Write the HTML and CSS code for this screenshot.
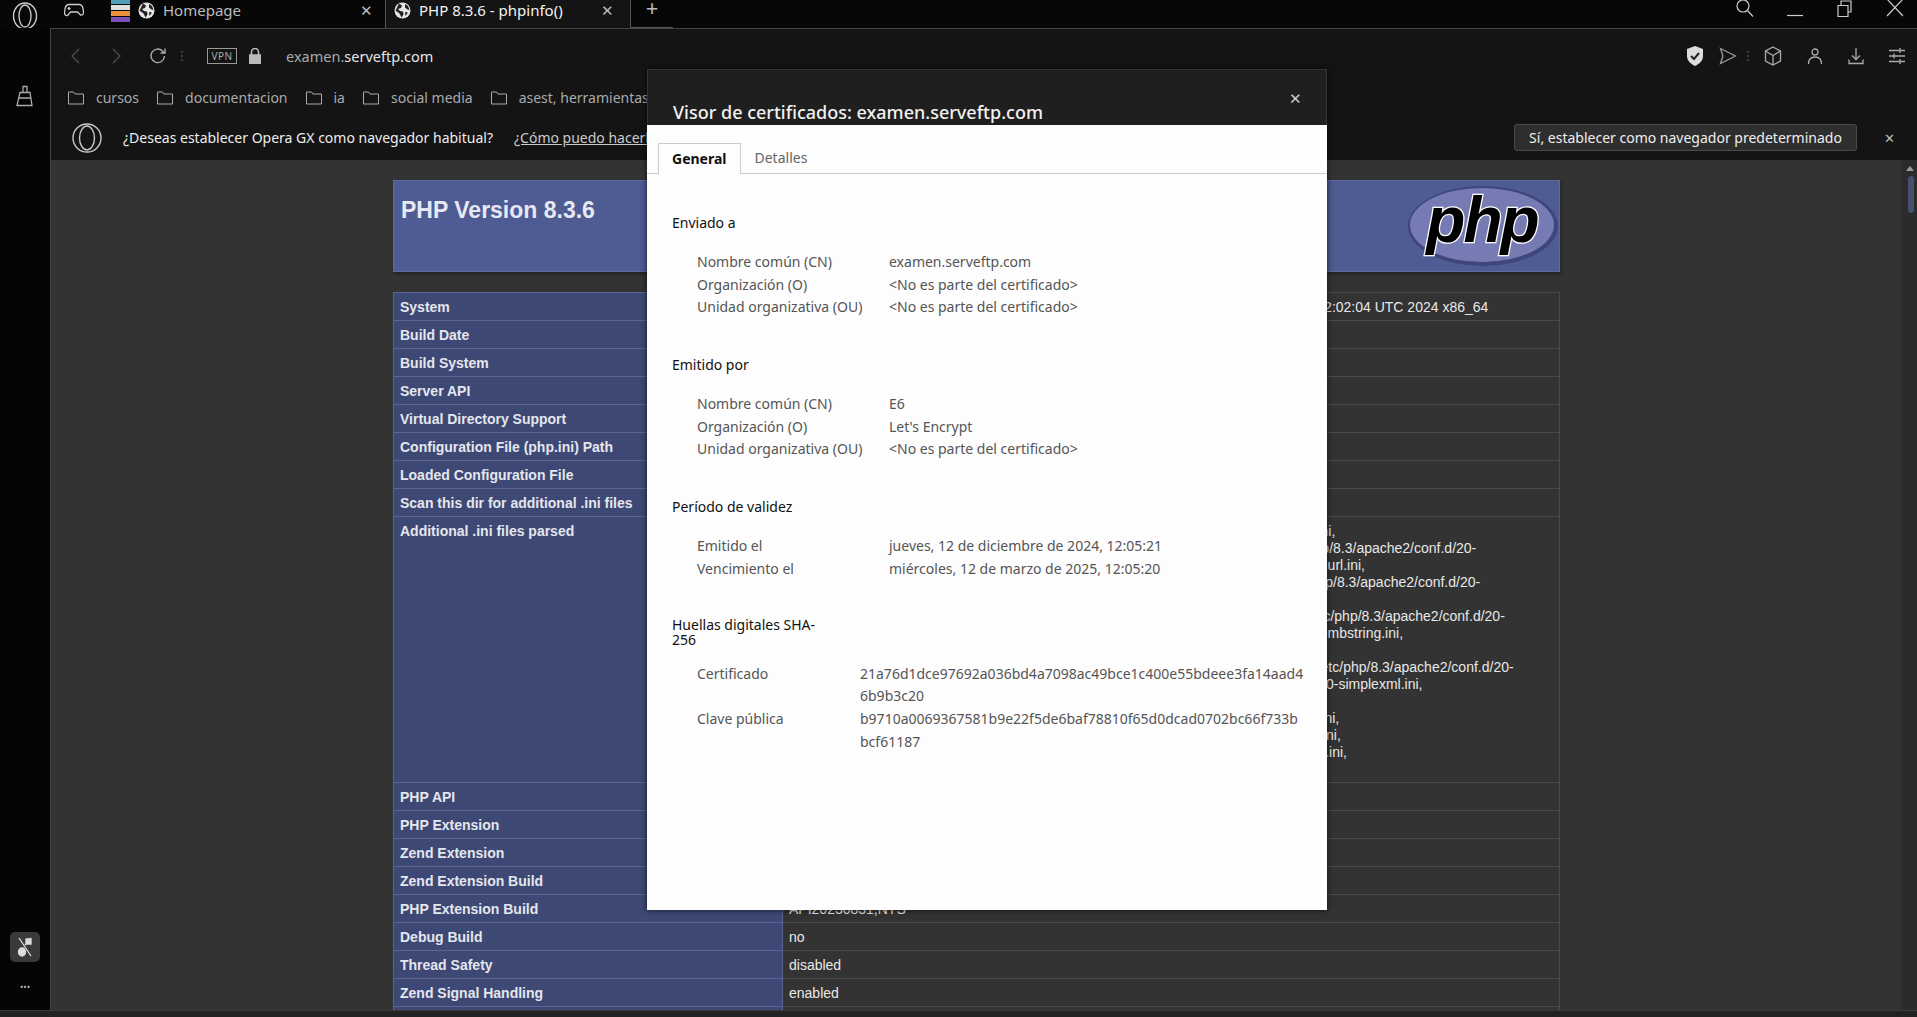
FILE: index.html
```html
<!DOCTYPE html>
<html lang="es">
<head>
<meta charset="utf-8">
<title>PHP 8.3.6 - phpinfo()</title>
<link rel="stylesheet" href="styles.css">
</head>
<body>
<!-- barra de pestañas -->
<div class="tabstrip">
	<svg class="opera-logo" width="26" height="28" viewBox="0 0 26 28"><ellipse cx="13" cy="14" rx="11.5" ry="13" /><ellipse cx="13" cy="14" rx="6" ry="11" /></svg>
	<svg class="ico-game" width="20" height="14" viewBox="0 0 20 14"><path d="M5 1.5h10c2 0 3.500 1.500 4 4l.5 4c.2 2-2 3.500-3.500 2l-2.500-2.500h-7L4 12c-1.500 1.500-3.700 0-3.500-2l.5-4c.5-3 2-4.500 4-4.500z" /><path d="M5 4v3M3.500 5.500h3M13.500 5.500h.1M15.500 5.500h.1" /></svg>
	<div class="ico-books"><i class="bk1"></i><i class="bk2"></i><i class="bk3"></i><i class="bk4"></i></div>
	<div class="tab">
		<svg class="globe" width="17" height="17" viewBox="0 0 17 17"><circle cx="8.500" cy="8.500" r="8" /><path d="M5 1.500l3 2-1 2.500-3 1 2 2 3 .5.500 3-2 3-2-4-4-3zM11 2l3 2 1.500 4-2-.5-2.500-2zM11 10l3 .5-2.500 3.500z" /></svg>
		<span class="tab-title">Homepage</span>
		<span class="tab-x">✕</span>
	</div>
	<div class="tab tab-on">
		<svg class="globe" width="17" height="17" viewBox="0 0 17 17"><circle cx="8.500" cy="8.500" r="8" /><path d="M5 1.500l3 2-1 2.500-3 1 2 2 3 .5.500 3-2 3-2-4-4-3zM11 2l3 2 1.500 4-2-.5-2.500-2zM11 10l3 .5-2.500 3.500z" /></svg>
		<span class="tab-title">PHP 8.3.6 - phpinfo()</span>
		<span class="tab-x">✕</span>
	</div>
	<div class="tab-plus">+</div>
	<div class="win-btns">
		<svg width="20" height="20" viewBox="0 0 20 20"><circle cx="8" cy="7" r="6" /><path d="M12.500 11.500l5.500 6" /></svg>
		<svg width="20" height="20" viewBox="0 0 20 20"><path d="M2 16.500h16" /></svg>
		<svg width="20" height="20" viewBox="0 0 20 20"><path d="M3 6.500h10v11H3zM6 6V2h10v11h-3" /></svg>
		<svg width="20" height="20" viewBox="0 0 20 20"><path d="M2 0l16 17M18 0L2 17" /></svg>
	</div>
</div>

<div class="main">
	<!-- barra lateral -->
	<div class="sidebar">
		<svg class="ico-bag" width="20" height="22" viewBox="0 0 20 22"><path d="M8 1.500h4v6H8zM5 7.500h10l2 13H2zM3.500 13h13" /></svg>
		<div class="side-btn">
			<svg width="16" height="20" viewBox="0 0 16 20"><path class="cut" d="M2 1l12 18M14 1L8 8" /><ellipse cx="5" cy="15" rx="3.500" ry="4" /><path d="M9 2h5v5H9z" /></svg>
		</div>
		<div class="side-dots">•••</div>
	</div>

	<div class="browser">
		<!-- barra de direcciones -->
		<div class="toolbar">
			<svg class="ico-nav dim" width="14" height="18" viewBox="0 0 14 18"><path d="M10 2L3 9l7 7" /></svg>
			<svg class="ico-nav dim fwd" width="14" height="18" viewBox="0 0 14 18"><path d="M4 2l7 7-7 7" /></svg>
			<svg class="ico-nav reload" width="18" height="18" viewBox="0 0 18 18"><path d="M15.500 9a6.800 6.800 0 1 1-2-5l2 2M16 1.500V6h-4.500" /></svg>
			<div class="tool-dots"><i></i><i></i><i></i></div>
			<span class="vpn">VPN</span>
			<svg class="ico-lock" width="12" height="16" viewBox="0 0 12 16"><path class="lock-body" d="M0 7h12v9H0z" /><path d="M2.500 7V4a3.500 3.500 0 0 1 7 0v3" /></svg>
			<div class="url"><span class="url-sub">examen.</span>serveftp.com</div>
			<div class="tool-right">
				<svg width="18" height="20" viewBox="0 0 18 20"><path class="shield" d="M9 0l8 3v7c0 5-4 8-8 10-4-2-8-5-8-10V3z" /><path class="tick" d="M5 10l3 3 5-6" /></svg>
				<svg class="send" width="18" height="18" viewBox="0 0 18 18"><path d="M1.500 1.500L16.500 9l-15 7.500L4 9z" /></svg>
				<div class="tool-dots"><i></i><i></i><i></i></div>
				<svg class="cube" width="18" height="20" viewBox="0 0 18 20"><path d="M9 1l7.500 4v10L9 19l-7.500-4V5zM1.500 5L9 9.500 16.500 5M9 9.500V19" /></svg>
				<svg class="person" width="16" height="18" viewBox="0 0 16 18"><circle cx="8" cy="5" r="3" /><path d="M1.500 17c0-5 2.500-7 6.500-7s6.500 2 6.500 7" /></svg>
				<svg class="down" width="18" height="18" viewBox="0 0 18 18"><path d="M9 1v11M5 8.500l4 4 4-4M2 12.500v4h14v-4" /></svg>
				<svg class="sliders" width="18" height="18" viewBox="0 0 18 18"><path d="M1 3.500h16M1 9h16M1 14.500h16M12 1v5M6 6.500v5M12 12v5" /></svg>
			</div>
		</div>

		<!-- marcadores -->
		<div class="bookmarks">
			<div class="bm"><svg width="16" height="14" viewBox="0 0 16 14"><path d="M.5 1h5l1.500 2h8.500v10H.5z" /></svg><span>cursos</span></div>
			<div class="bm"><svg width="16" height="14" viewBox="0 0 16 14"><path d="M.5 1h5l1.500 2h8.500v10H.5z" /></svg><span>documentacion</span></div>
			<div class="bm"><svg width="16" height="14" viewBox="0 0 16 14"><path d="M.5 1h5l1.500 2h8.500v10H.5z" /></svg><span>ia</span></div>
			<div class="bm"><svg width="16" height="14" viewBox="0 0 16 14"><path d="M.5 1h5l1.500 2h8.500v10H.5z" /></svg><span>social media</span></div>
			<div class="bm"><svg width="16" height="14" viewBox="0 0 16 14"><path d="M.5 1h5l1.500 2h8.500v10H.5z" /></svg><span>asest, herramientas, etc</span></div>
		</div>

		<!-- aviso navegador predeterminado -->
		<div class="infobar">
			<svg class="opera-logo" width="30" height="30" viewBox="0 0 30 30"><ellipse cx="15" cy="15" rx="14" ry="14" /><ellipse cx="15" cy="15" rx="7.500" ry="12" /></svg>
			<span class="info-text">¿Deseas establecer Opera GX como navegador habitual?</span>
			<a class="info-link" href="#">¿Cómo puedo hacerlo?</a>
			<button class="info-btn">Sí, establecer como navegador predeterminado</button>
			<span class="info-x">✕</span>
		</div>

		<div class="page-wrap">
			<div class="page">
				<div class="php-head">
					<h1>PHP Version 8.3.6</h1>
					<svg class="php-logo" width="150" height="80" viewBox="0 0 150 80">
						<ellipse class="logo-edge" cx="75" cy="40" rx="75" ry="40" />
						<ellipse class="logo-fill" cx="74" cy="39" rx="72" ry="37" />
						<text class="logo-text" x="74" y="56" text-anchor="middle">php</text>
					</svg>
				</div>
				<table class="info">
					<tr><th>System</th><td>Linux vps-1234 6.8.0-45-generic #45-Ubuntu SMP PREEMPT_DYNAMIC Fri Aug 30 12:02:04 UTC 2024 x86_64</td></tr>
					<tr><th>Build Date</th><td>Apr 11 2024 20:23:38</td></tr>
					<tr><th>Build System</th><td>Linux</td></tr>
					<tr><th>Server API</th><td>Apache 2.0 Handler</td></tr>
					<tr><th>Virtual Directory Support</th><td>disabled</td></tr>
					<tr><th>Configuration File (php.ini) Path</th><td>/etc/php/8.3/apache2</td></tr>
					<tr><th>Loaded Configuration File</th><td>/etc/php/8.3/apache2/php.ini</td></tr>
					<tr><th>Scan this dir for additional .ini files</th><td>/etc/php/8.3/apache2/conf.d</td></tr>
					<tr class="row-tall"><th>Additional .ini files parsed</th><td>/etc/php/8.3/apache2/conf.d/10-mysqlnd.ini, /etc/php/8.3/apache2/conf.d/10-opcache.ini,<br>
						/etc/php/8.3/apache2/conf.d/10-pdo.ini, /etc/php/8.3/apache2/conf.d/15-xml.ini, /etc/php/8.3/apache2/conf.d/20-<br>
						calendar.ini, /etc/php/8.3/apache2/conf.d/20-ctype.ini, /etc/php/8.3/apache2/conf.d/20-curl.ini,<br>
						/etc/php/8.3/apache2/conf.d/20-dom.ini, /etc/php/8.3/apache2/conf.d/20-exif.ini, /etc/php/8.3/apache2/conf.d/20-<br>
						ffi.ini, /etc/php/8.3/apache2/conf.d/20-fileinfo.ini, /etc/php/8.3/apache2/conf.d/20-ftp.ini,<br>
						/etc/php/8.3/apache2/conf.d/20-gettext.ini, /etc/php/8.3/apache2/conf.d/20-iconv.ini, /etc/php/8.3/apache2/conf.d/20-<br>
						mbstring.ini, /etc/php/8.3/apache2/conf.d/20-mysqli.ini, /etc/php/8.3/apache2/conf.d/20-mbstring.ini,<br>
						/etc/php/8.3/apache2/conf.d/20-pdo_mysql.ini, /etc/php/8.3/apache2/conf.d/20-phar.ini,<br>
						/etc/php/8.3/apache2/conf.d/20-posix.ini, /etc/php/8.3/apache2/conf.d/20-readline.ini, /etc/php/8.3/apache2/conf.d/20-<br>
						shmop.ini, /etc/php/8.3/apache2/conf.d/20-simplexml.ini, /etc/php/8.3/apache2/conf.d/20-simplexml.ini,<br>
						/etc/php/8.3/apache2/conf.d/20-sockets.ini,<br>
						/etc/php/8.3/apache2/conf.d/20-sysvmsg.ini, /etc/php/8.3/apache2/conf.d/20-sysvsem.ini,<br>
						/etc/php/8.3/apache2/conf.d/20-sysvshm.ini, /etc/php/8.3/apache2/conf.d/20-tokenizer.ini,<br>
						/etc/php/8.3/apache2/conf.d/20-xmlreader.ini, /etc/php/8.3/apache2/conf.d/20-xmlwriter.ini,</td></tr>
					<tr><th>PHP API</th><td>20230831</td></tr>
					<tr><th>PHP Extension</th><td>20230831</td></tr>
					<tr><th>Zend Extension</th><td>420230831</td></tr>
					<tr><th>Zend Extension Build</th><td>API420230831,NTS</td></tr>
					<tr><th>PHP Extension Build</th><td>API20230831,NTS</td></tr>
					<tr><th>Debug Build</th><td>no</td></tr>
					<tr><th>Thread Safety</th><td>disabled</td></tr>
					<tr><th>Zend Signal Handling</th><td>enabled</td></tr>
					<tr><th>Zend Memory Manager</th><td>enabled</td></tr>
				</table>
			</div>
			<div class="scroll">
				<span class="scroll-up"></span>
				<span class="scroll-thumb"></span>
			</div>
		</div>
	</div>
</div>
<div class="statusline"></div>

<!-- visor de certificados -->
<div class="modal">
	<div class="modal-head">
		<span class="modal-title">Visor de certificados: examen.serveftp.com</span>
		<span class="modal-x">✕</span>
	</div>
	<div class="modal-tabs">
		<span class="mtab mtab-on">General</span>
		<span class="mtab">Detalles</span>
	</div>
	<div class="modal-body">
		<h3>Enviado a</h3>
		<dl class="fields">
			<dt>Nombre común (CN)</dt><dd>examen.serveftp.com</dd>
			<dt>Organización (O)</dt><dd>&lt;No es parte del certificado&gt;</dd>
			<dt>Unidad organizativa (OU)</dt><dd>&lt;No es parte del certificado&gt;</dd>
		</dl>
		<h3>Emitido por</h3>
		<dl class="fields">
			<dt>Nombre común (CN)</dt><dd>E6</dd>
			<dt>Organización (O)</dt><dd>Let's Encrypt</dd>
			<dt>Unidad organizativa (OU)</dt><dd>&lt;No es parte del certificado&gt;</dd>
		</dl>
		<h3>Período de validez</h3>
		<dl class="fields">
			<dt>Emitido el</dt><dd>jueves, 12 de diciembre de 2024, 12:05:21</dd>
			<dt>Vencimiento el</dt><dd>miércoles, 12 de marzo de 2025, 12:05:20</dd>
		</dl>
		<h3 class="h-narrow">Huellas digitales SHA-256</h3>
		<dl class="fields fields-hash">
			<dt>Certificado</dt><dd>21a76d1dce97692a036bd4a7098ac49bce1c400e55bdeee3fa14aad46b9b3c20</dd>
			<dt>Clave pública</dt><dd>b9710a0069367581b9e22f5de6baf78810f65d0dcad0702bc66f733bbcf61187</dd>
		</dl>
	</div>
</div>
</body>
</html>
```

FILE: styles.css
```css
* {
	margin: 0;
	padding: 0;
	box-sizing: border-box;
}
html, body {
	width: 1917px;
	height: 1017px;
	overflow: hidden;
}
body {
	background-color: #050505;
	font-family: "Noto Sans", "Liberation Sans", sans-serif;
	font-size: 14px;
	color: #ddd;
	position: relative;
}
svg {
	fill: none;
	stroke: #bbb;
	stroke-width: 1.3;
	flex: none;
}

/* pestañas */
.tabstrip {
	height: 28px;
	display: flex;
	align-items: flex-start;
	background-color: #070707;
	overflow: hidden;
}
.tabstrip .opera-logo {
	margin: 2px 0 0 12px;
}
.opera-logo {
	stroke: #c8c8c8;
	stroke-width: 1.4;
}
.ico-game {
	margin: 3px 0 0 26px;
	stroke: #ccc;
}
.ico-books {
	width: 19px;
	margin: -1px 0 0 27px;
	display: flex;
	flex-direction: column;
	gap: 1px;
}
.ico-books i {
	height: 5px;
	display: block;
}
.bk1 { background-color: #4f9fb8; }
.bk2 { background-color: #e0e0e0; }
.bk3 { background-color: #e8913a; }
.bk4 { background-color: #7a52b8; }
.tab {
	width: 240px;
	height: 28px;
	margin-left: 0;
	display: flex;
	align-items: flex-start;
	padding: 1px 12px 0 0;
	color: #bbb;
}
.tab:nth-of-type(2) {
	margin-left: 8px;
	width: 247px;
}
.globe {
	stroke: none;
	fill: #e6e6e6;
	margin: 1px 8px 0 0;
}
.globe path {
	fill: #222;
}
.tab-title {
	flex: 1;
	font-size: 15px;
	line-height: 18px;
}
.tab-x {
	font-size: 15px;
	line-height: 18px;
	color: #bbb;
}
.tab-on {
	width: 246px;
	padding: 1px 16px 0 8px;
	color: #f2f2f2;
	background-color: #141414;
	border-left: 1px solid #555;
	border-right: 1px solid #555;
}
.tab-plus {
	width: 42px;
	height: 28px;
	text-align: center;
	font-size: 22px;
	line-height: 14px;
	color: #bbb;
	border-bottom: 1px solid #555;
	border-right: 0;
}
.win-btns {
	margin-left: auto;
	padding-right: 12px;
	display: flex;
	gap: 30px;
	margin-top: -1px;
}
.win-btns svg {
	stroke: #ccc;
	stroke-width: 1.2;
}

.main {
	height: 982px;
	display: flex;
}

/* barra lateral */
.sidebar {
	width: 50px;
	flex: none;
	display: flex;
	flex-direction: column;
	align-items: center;
}
.ico-bag {
	margin-top: 57px;
	stroke: #aaa;
}
.side-btn {
	width: 30px;
	height: 30px;
	margin-top: auto;
	background-color: #3a3a3a;
	border-radius: 5px;
	display: flex;
	align-items: center;
	justify-content: center;
}
.side-btn svg {
	stroke: #ddd;
	fill: #ddd;
}
.side-dots {
	font-size: 9px;
	letter-spacing: 0;
	color: #bbb;
	margin: 19px 0 17px;
	line-height: 12px;
}

.browser {
	flex: 1;
	min-width: 0;
	display: flex;
	flex-direction: column;
	background-color: #141414;
	border-left: 1px solid #444;
	border-top: 1px solid #444;
}

/* direcciones */
.toolbar {
	height: 51px;
	display: flex;
	align-items: center;
	padding-top: 2px;
}
.ico-nav {
	stroke-width: 1.4;
}
.dim {
	stroke: #4d4d4d;
	margin-left: 18px;
}
.fwd {
	margin-left: 26px;
}
.reload {
	margin-left: 26px;
	stroke: #aaa;
}
.tool-dots {
	display: flex;
	flex-direction: column;
	gap: 2px;
	margin-left: 14px;
}
.tool-dots i {
	width: 2px;
	height: 2px;
	display: block;
	background-color: #3c3c3c;
}
.vpn {
	width: 30px;
	height: 16px;
	margin-left: 24px;
	border: 1px solid #999;
	font-size: 10px;
	line-height: 14px;
	text-align: center;
	color: #aaa;
	letter-spacing: .5px;
}
.ico-lock {
	margin-left: 12px;
	stroke: #bbb;
	stroke-width: 1.6;
}
.lock-body {
	fill: #bbb;
}
.url {
	margin-left: 25px;
	font-size: 14.5px;
	color: #e6e6e6;
}
.url-sub {
	color: #aaa;
}
.tool-right {
	margin-left: auto;
	padding-right: 11px;
	display: flex;
	align-items: center;
}
.shield {
	fill: #ddd;
	stroke: none;
}
.tick {
	stroke: #222;
	stroke-width: 2;
}
.send {
	margin-left: 15px;
	stroke: #999;
}
.tool-right .tool-dots {
	margin-left: 10px;
}
.cube {
	margin-left: 15px;
	stroke: #aaa;
}
.person {
	margin-left: 25px;
	stroke: #aaa;
}
.down {
	margin-left: 24px;
	stroke: #aaa;
}
.sliders {
	margin-left: 23px;
	stroke: #aaa;
}

/* marcadores */
.bookmarks {
	height: 35px;
	display: flex;
	align-items: center;
	padding-left: 17px;
	gap: 18px;
	color: #aaa;
	white-space: nowrap;
	overflow: hidden;
}
.bm {
	display: flex;
	align-items: center;
	gap: 12px;
}
.bm svg {
	stroke: #aaa;
	stroke-width: 1;
}

/* aviso */
.infobar {
	height: 45px;
	display: flex;
	align-items: center;
	padding-left: 21px;
	color: #eee;
	white-space: nowrap;
}
.info-text {
	margin-left: 21px;
}
.info-link {
	margin-left: 21px;
	color: #ccc;
}
.info-btn {
	margin-left: auto;
	width: 343px;
	height: 27px;
	background-color: #2e2e2e;
	border: 1px solid #4a4a4a;
	border-radius: 3px;
	color: #eee;
	font-family: inherit;
	font-size: 14px;
}
.info-x {
	margin: 0 22px 0 27px;
	font-size: 13px;
	color: #bbb;
}

/* contenido */
.page-wrap {
	flex: 1;
	min-height: 0;
	display: flex;
	background-color: #333;
	overflow: hidden;
}
.page {
	flex: 1;
	padding-top: 20px;
	font-family: "Liberation Sans", Arial, sans-serif;
	color: #e8e8e8;
	display: flex;
	flex-direction: column;
	align-items: center;
}
.php-head {
	width: 1167px;
	height: 92px;
	flex: none;
	padding: 4px 7px;
	background-color: #4f5b93;
	border: 1px solid #5f6a9c;
	box-shadow: 1px 2px 3px #222;
	display: flex;
	justify-content: space-between;
	align-items: flex-start;
}
.php-head h1 {
	font-size: 23px;
	line-height: 50px;
	color: #e6e8f2;
}
.logo-edge {
	fill: #3f4679;
	stroke: none;
}
.logo-fill {
	fill: #777bb3;
	stroke: none;
}
.logo-text {
	font-family: "Liberation Sans", sans-serif;
	font-size: 64px;
	font-weight: bold;
	font-style: italic;
	fill: #000;
	stroke: #fff;
	stroke-width: 2.5;
	paint-order: stroke;
	letter-spacing: -2px;
}
.php-logo {
	margin: 1px -6px 0 0;
}
.info {
	width: 1167px;
	margin-top: 20px;
	border-collapse: collapse;
	table-layout: fixed;
	flex: none;
	font-size: 14px;
}
.info th,
.info td {
	height: 28px;
	padding: 0 6px;
	vertical-align: top;
	line-height: 17px;
	padding-top: 6px;
	text-align: left;
}
.info th {
	width: 389px;
	background-color: #3e4874;
	border: 1px solid #5a6596;
	font-weight: bold;
	color: #e4e6ee;
	white-space: nowrap;
	overflow: hidden;
}
.info td {
	background-color: #333;
	border: 1px solid #4a4a4a;
	white-space: nowrap;
	overflow: hidden;
}
.row-tall td,
.row-tall th {
	height: 266px;
}
.scroll {
	width: 15px;
	flex: none;
	background-color: #2b2b2b;
	position: relative;
}
.scroll-up {
	display: block;
	width: 0;
	height: 0;
	margin: 6px 0 0 4px;
	border: 4px solid transparent;
	border-top: 0;
	border-bottom: 5px solid #999;
}
.scroll-thumb {
	display: block;
	width: 6px;
	height: 37px;
	margin: 5px 0 0 6px;
	background-color: #45506f;
	border-radius: 3px;
}
.statusline {
	height: 7px;
	background-color: #222;
	border-top: 1px solid #3c3c3c;
}

/* visor de certificados */
.modal {
	position: absolute;
	left: 647px;
	top: 69px;
	width: 680px;
	height: 841px;
	background-color: #fdfdfd;
	box-shadow: 0 0 6px rgba(0, 0, 0, .7);
	color: #000;
	font-size: 14px;
}
.modal-head {
	height: 56px;
	padding: 0 25px;
	background-color: #1f1f1f;
	border: 1px solid #333;
	border-bottom: 0;
	display: flex;
	justify-content: space-between;
	align-items: flex-end;
	color: #f2f2f2;
}
.modal-title {
	font-size: 18px;
	font-weight: 500;
	line-height: 26px;
	margin-bottom: 0;
}
.modal-x {
	font-size: 15px;
	line-height: 20px;
	margin: 0 -1px 17px 0;
	color: #ccc;
}
.modal-tabs {
	height: 49px;
	padding: 18px 0 0 11px;
	display: flex;
	border-bottom: 1px solid #ccc;
}
.mtab {
	padding: 0 14px;
	height: 31px;
	line-height: 29px;
	color: #666;
}
.mtab-on {
	height: 31px;
	font-weight: bold;
	color: #111;
	background-color: #fdfdfd;
	border: 1px solid #ccc;
	border-bottom: 0;
	padding: 0 13px;
}
.modal-body {
	padding: 39px 25px 0;
}
.modal-body h3 {
	font-size: 14px;
	font-weight: normal;
	line-height: 20px;
	color: #111;
}
.h-narrow {
	width: 150px;
	line-height: 15px !important;
}
.fields {
	display: grid;
	grid-template-columns: 192px 1fr;
	grid-auto-rows: 22.7px;
	padding: 18px 0 0 25px;
	margin-bottom: 36px;
	line-height: 22.7px;
	color: #555;
}
.fields dd {
	color: #555;
}
.fields-hash {
	grid-template-columns: 163px 1fr;
	grid-auto-rows: auto;
	padding-top: 16px;
}
.fields-hash dd {
	width: 445px;
	word-break: break-all;
}
```
